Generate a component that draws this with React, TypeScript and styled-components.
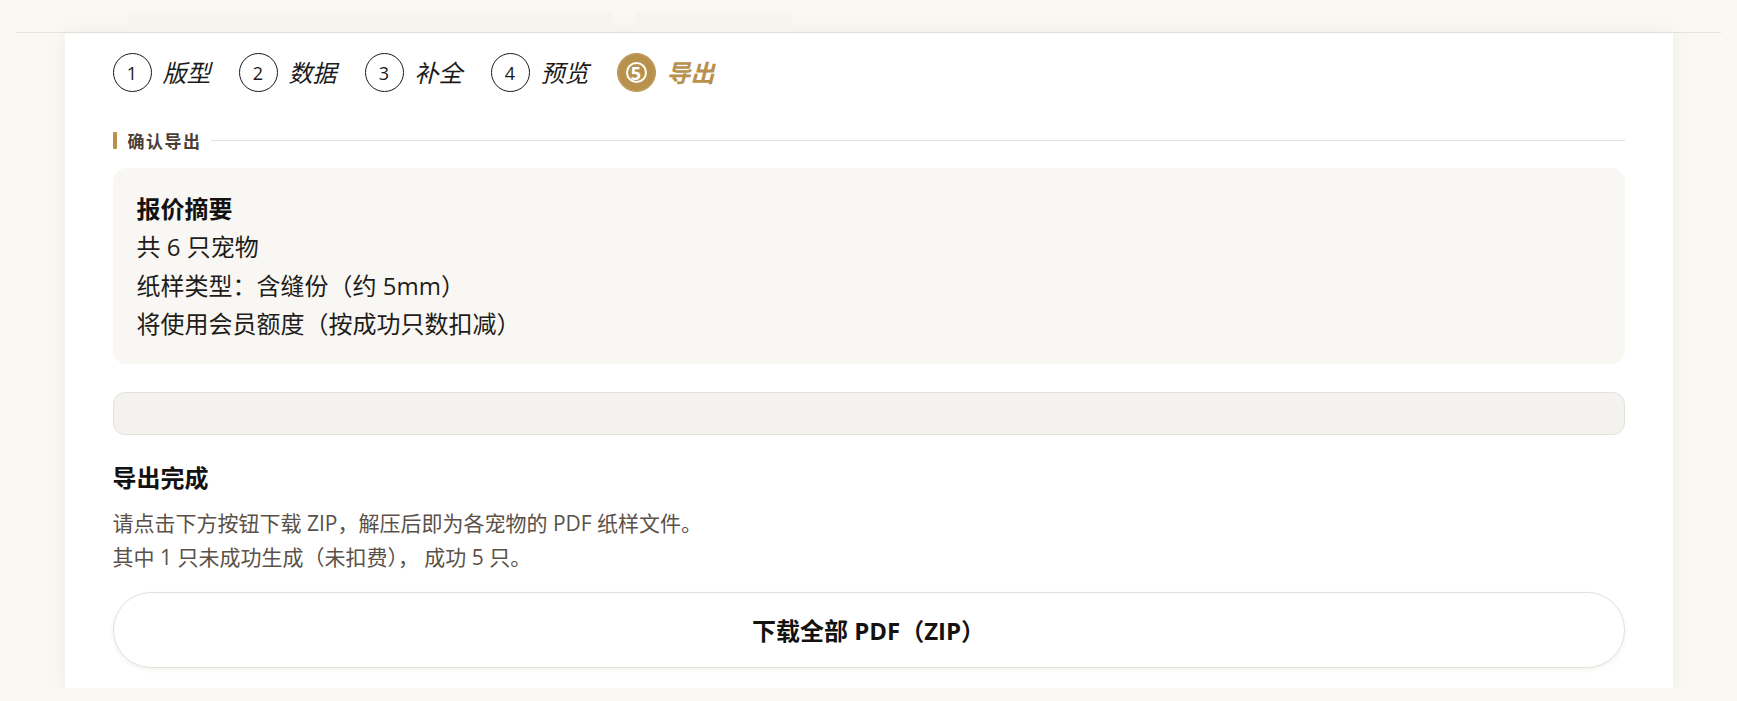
import { FC } from 'react';
import styled, { createGlobalStyle } from 'styled-components';

const GOLD = '#b8914d';

const GlobalStyle = createGlobalStyle`
    html, body {
        margin: 0;
        padding: 0;
        background: #f9f8f2;
    }
    body {
        font-family: "Open Sans", "Noto Sans CJK SC", sans-serif;
        color: #1f1c19;
    }
    * {
        box-sizing: border-box;
    }
`;

interface IStep {
    num: number
    label: string
};

const STEPS: IStep[] = [
    { num: 1, label: '版型' },
    { num: 2, label: '数据' },
    { num: 3, label: '补全' },
    { num: 4, label: '预览' },
    { num: 5, label: '导出' },
];

const ACTIVE_STEP = 5;

const SUMMARY_LINES = [
    '共 6 只宠物',
    '纸样类型：含缝份（约 5mm）',
    '将使用会员额度（按成功只数扣减）',
];

export default function App() {
    return (
        <>
            <GlobalStyle />
            <Header>
                <HeaderBlock $width={485} />
                <HeaderBlock $width={156} />
            </Header>
            <Card>
                <Steps>
                    { STEPS.map((step) => (
                        <Step key={step.num} step={step} active={step.num === ACTIVE_STEP} />
                    )) }
                </Steps>

                <SectionHead>
                    <SectionBar />
                    <SectionTitle>确认导出</SectionTitle>
                    <SectionRule />
                </SectionHead>

                <Summary>
                    <SummaryTitle>报价摘要</SummaryTitle>
                    { SUMMARY_LINES.map((line) => <SummaryLine key={line}>{ line }</SummaryLine>) }
                </Summary>

                <Track />

                <DoneTitle>导出完成</DoneTitle>
                <DoneText>
                    请点击下方按钮下载 ZIP，解压后即为各宠物的 PDF 纸样文件。
                    <br />
                    其中 1 只未成功生成（未扣费）， 成功 5 只。
                </DoneText>

                <DownloadButton type="button">下载全部 PDF（ZIP）</DownloadButton>
            </Card>
        </>
    );
}

const Step: FC<{ step: IStep, active: boolean }> = ({ step, active }) => (
    <StepItem>
        <StepCircle $active={active}>{ step.num }</StepCircle>
        <StepLabel $active={active}>{ step.label }</StepLabel>
    </StepItem>
);

const Header = styled.header`
    height: 33px;
    margin: 0 16px;
    padding: 13px 0 0 111px;
    display: flex;
    gap: 23px;
    border-bottom: 1px solid #e7e3dc;
`;

const HeaderBlock = styled.div<{ $width: number }>`
    width: ${({ $width }) => $width}px;
    height: 19px;
    background: #f5f4ee;
`;

const Card = styled.main`
    width: 1608px;
    margin: 0 auto;
    padding: 20px 48px 20px;
    background: #ffffff;
    box-shadow: 0 0 22px rgba(120, 100, 60, 0.07);
`;

const Steps = styled.nav`
    display: flex;
    align-items: center;
    gap: 28px;
    height: 39px;
`;

const StepItem = styled.div`
    display: flex;
    align-items: center;
    gap: 11px;
`;

const StepCircle = styled.span<{ $active: boolean }>`
    width: 39px;
    height: 39px;
    border-radius: 50%;
    display: flex;
    align-items: center;
    justify-content: center;
    font-size: 18px;
    line-height: 1;
    border: 1.2px solid ${({ $active }) => ($active ? GOLD : '#1c1a18')};
    background: ${({ $active }) => ($active ? GOLD : '#ffffff')};
    color: ${({ $active }) => ($active ? '#ffffff' : '#1c1a18')};
    font-weight: ${({ $active }) => ($active ? 700 : 400)};
    box-shadow: ${({ $active }) => ($active ? `inset 0 0 0 8px ${GOLD}, inset 0 0 0 10px #ffffff` : 'none')};
`;

const StepLabel = styled.span<{ $active: boolean }>`
    font-size: 24px;
    font-style: italic;
    line-height: 1;
    color: ${({ $active }) => ($active ? GOLD : '#1c1a18')};
    font-weight: ${({ $active }) => ($active ? 700 : 400)};
`;

const SectionHead = styled.div`
    margin-top: 38px;
    height: 20px;
    display: flex;
    align-items: center;
`;

const SectionBar = styled.span`
    width: 4px;
    height: 17px;
    border-radius: 1px;
    background: ${GOLD};
`;

const SectionTitle = styled.span`
    margin-left: 11px;
    font-size: 17px;
    font-weight: 700;
    letter-spacing: 1.5px;
    color: #4a4037;
`;

const SectionRule = styled.span`
    flex: 1;
    height: 1px;
    margin-left: 9px;
    background: #e3e1dc;
`;

const Summary = styled.section`
    margin-top: 18px;
    padding: 22px 24px 20px;
    border-radius: 14px;
    background: #f8f7f3;
    font-size: 24px;
    line-height: 38.4px;
    color: #1f1c19;
`;

const SummaryTitle = styled.div`
    font-weight: 700;
    color: #141210;
`;

const SummaryLine = styled.div``;

const Track = styled.div`
    margin-top: 28px;
    height: 43px;
    border-radius: 12px;
    border: 1px solid #e3e1dc;
    background: #f3f2ee;
`;

const DoneTitle = styled.h3`
    margin: 24px 0 0;
    font-size: 24px;
    line-height: 38px;
    font-weight: 700;
    color: #141210;
`;

const DoneText = styled.p`
    margin: 9px 0 0;
    font-size: 21px;
    line-height: 34px;
    color: #5b5148;
`;

const DownloadButton = styled.button`
    display: block;
    width: 100%;
    height: 76px;
    margin-top: 18px;
    border-radius: 999px;
    border: 1px solid #e4dfd8;
    background: #ffffff;
    box-shadow: 0 2px 4px rgba(90, 70, 40, 0.07);
    font-family: inherit;
    font-size: 24px;
    font-weight: 700;
    color: #141210;
    cursor: pointer;
`;
